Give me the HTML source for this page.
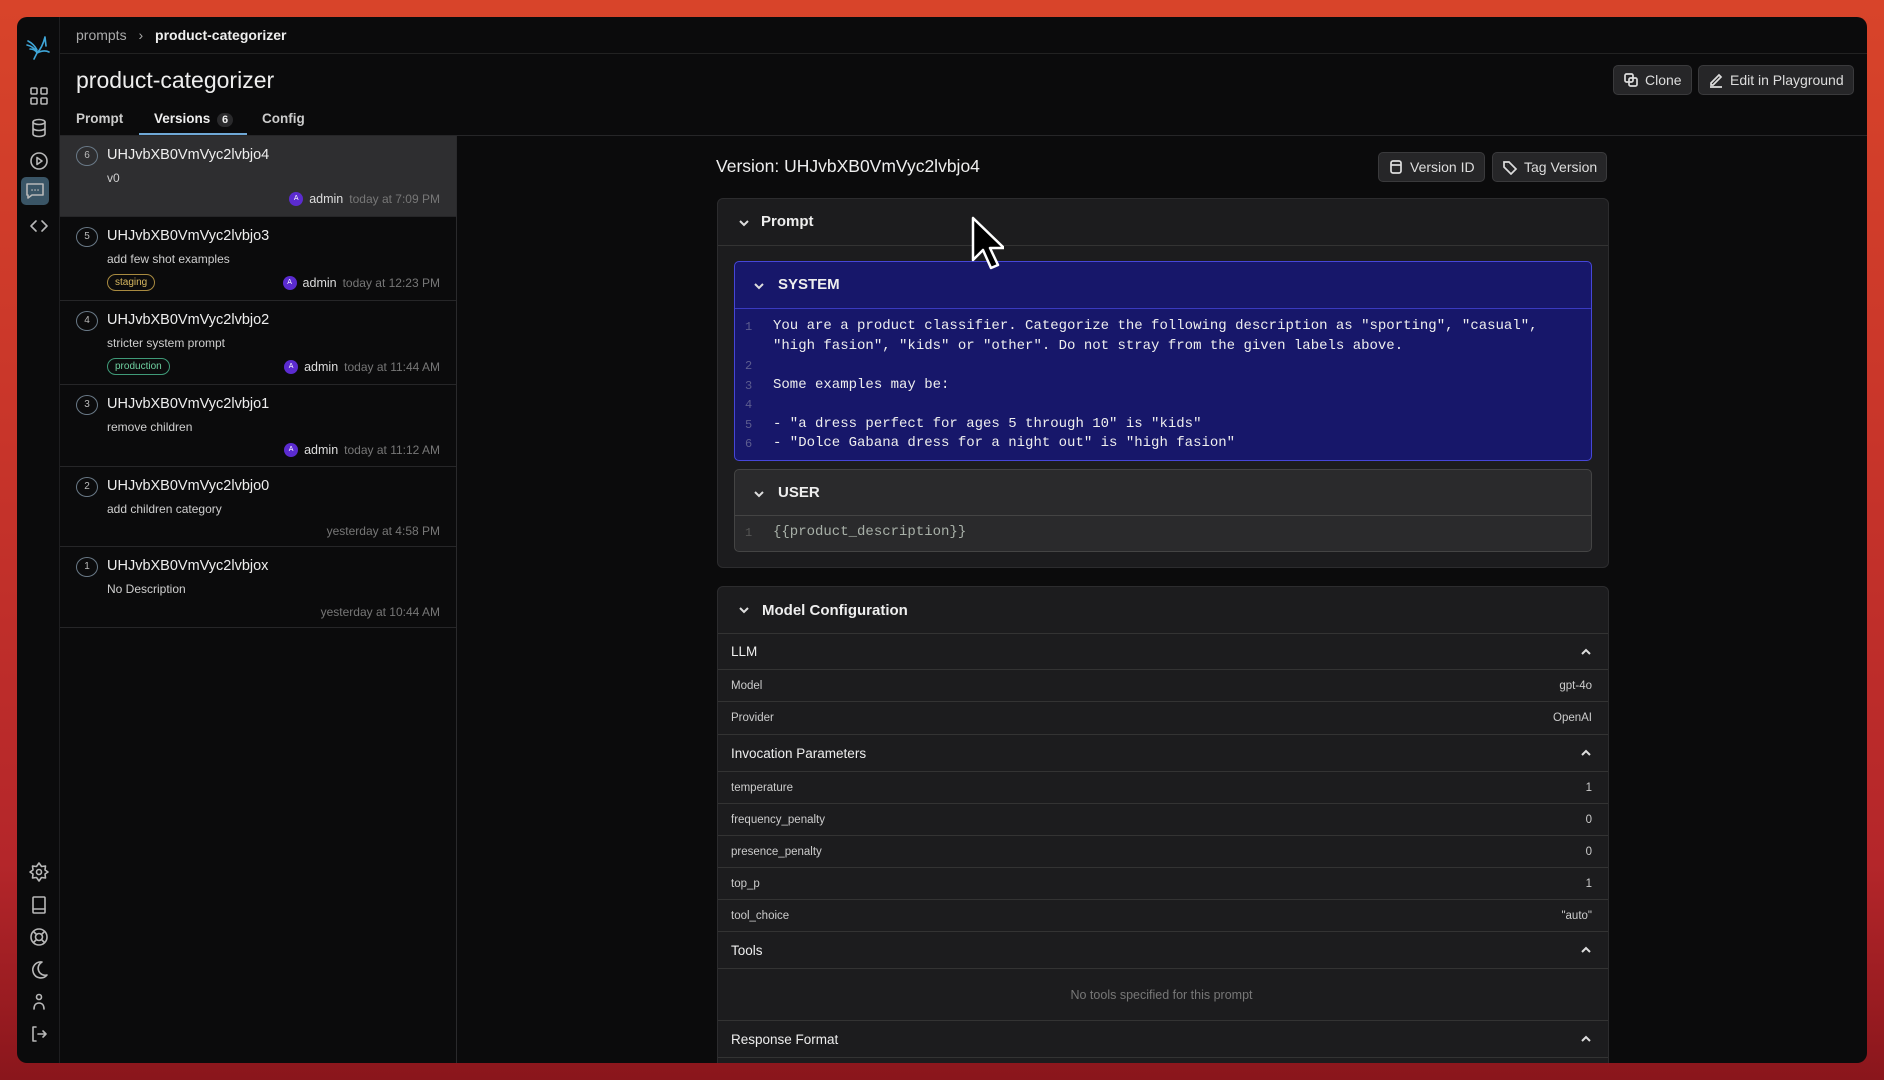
<!DOCTYPE html>
<html><head><meta charset="utf-8"><style>
*{box-sizing:border-box;margin:0;padding:0}
body{width:1884px;height:1080px;overflow:hidden;font-family:"Liberation Sans",sans-serif;background:linear-gradient(180deg,#d8442a 0%,#c8352a 40%,#b4262a 80%,#8a161c 100%);position:relative;color:#e6e6e6}
.win{position:absolute;left:17px;top:17px;width:1850px;height:1046px;background:#0b0b0c;border-radius:10px;overflow:hidden}
.abs{position:absolute}
.side{left:0;top:0;width:43px;height:100%;border-right:1px solid #1e1e20}
.ic{position:absolute;left:11px;width:22px;height:22px}
.ic svg{width:22px;height:22px;stroke:#b8b8b8;fill:none;stroke-width:1.6;stroke-linecap:round;stroke-linejoin:round}
.btn{position:absolute;height:30px;border:1px solid #3a3a3c;background:#262628;border-radius:5px;font-size:14px;color:#ddd;display:flex;align-items:center;padding:0 9px;gap:6px}
.btn svg{width:16px;height:16px;stroke:#ddd;fill:none;stroke-width:1.7}
.item{position:absolute;left:43px;width:396px;border-bottom:1px solid #262628}
.item .n{position:absolute;left:16px;top:10px;width:22px;height:20px;border:1.5px solid #6a7a88;border-radius:50%;font-size:10px;color:#bbb;text-align:center;line-height:17px}
.item .t{position:absolute;left:47px;top:11px;font-size:14.5px;color:#eee}
.item .d{position:absolute;left:47px;top:35px;font-size:12px;color:#cfcfcf}
.item .m{position:absolute;right:16px;font-size:12px;color:#777;display:flex;align-items:center;gap:6px}
.item .m b{font-weight:normal;color:#ddd;font-size:12.5px}
.av{width:14px;height:14px;border-radius:50%;background:#5b2bd0;color:#fff;font-size:7px;text-align:center;line-height:14px}
.tag{position:absolute;left:47px;font-size:10px;border:1px solid;border-radius:9px;padding:2px 7px}
.card{position:absolute;left:700px;width:892px;background:#1c1c1e;border:1px solid #2c2c2e;border-radius:6px;overflow:hidden}
.row{position:absolute;left:0;right:0;border-bottom:1px solid #333;display:flex;align-items:center;justify-content:space-between;padding:0 16px 0 13px;font-size:11.5px;color:#ccc}
.row.h{font-size:13.5px;color:#eee}
.chev{width:12px;height:12px;stroke:#ddd;fill:none;stroke-width:2}
.code{font-family:"Liberation Mono",monospace;font-size:14px;line-height:19.5px;white-space:pre}
.ln{position:absolute;left:10px;color:#5d5d90;font-family:"Liberation Mono",monospace;font-size:12px;line-height:19.5px;white-space:pre}
</style></head><body>
<div class="win">
 <div class="abs side">
  <svg class="abs" style="left:8px;top:16px;width:28px;height:28px" viewBox="0 0 28 28" fill="none" stroke="#3fa6d8" stroke-width="1.6" stroke-linecap="round"><path d="M3 8c4 2 7 5 9 9M2 12c5 1 8 4 10 7M5 16c4 0 6 2 7 4M12 20l-3 6M12 20c3-3 6-8 8-16M12 20c4-2 8-3 12-1M20 4l1 9"/></svg>
  <div class="ic" style="top:68px"><svg viewBox="0 0 22 22"><rect x="3" y="3" width="6" height="6" rx="1"/><rect x="13" y="3" width="6" height="6" rx="1"/><rect x="3" y="13" width="6" height="6" rx="1"/><rect x="13" y="13" width="6" height="6" rx="1"/></svg></div>
  <div class="ic" style="top:100px"><svg viewBox="0 0 22 22"><ellipse cx="11" cy="5" rx="6" ry="2.5"/><path d="M5 5v12c0 1.4 2.7 2.5 6 2.5s6-1.1 6-2.5V5M5 11c0 1.4 2.7 2.5 6 2.5s6-1.1 6-2.5"/></svg></div>
  <div class="ic" style="top:133px"><svg viewBox="0 0 22 22"><circle cx="11" cy="11" r="8"/><path d="M9 7.5v7l5-3.5z"/></svg></div>
  <div class="abs" style="left:4px;top:160px;width:28px;height:28px;background:#3a5566;border-radius:5px"></div>
  <div class="ic" style="top:163px;left:7px"><svg viewBox="0 0 22 22"><path d="M3 4h16v11H8l-4 3v-3H3z"/><path d="M8 10h.1M11 10h.1M14 10h.1"/></svg></div>
  <div class="ic" style="top:198px"><svg viewBox="0 0 22 22"><path d="M8 6l-5 5 5 5M14 6l5 5-5 5"/></svg></div>
  <div class="ic" style="top:844px"><svg viewBox="0 0 22 22"><path d="M11 2l2.5 3.5 4-.5-.5 4L20 11l-3 2 .5 4-4-.5L11 20l-2.5-3.5-4 .5.5-4L2 11l3-2-.5-4 4 .5z"/><circle cx="11" cy="11" r="2.5"/></svg></div>
  <div class="ic" style="top:877px"><svg viewBox="0 0 22 22"><rect x="5" y="3" width="12" height="16" rx="1"/><path d="M5 15h12"/></svg></div>
  <div class="ic" style="top:909px"><svg viewBox="0 0 22 22"><circle cx="11" cy="11" r="8"/><circle cx="11" cy="11" r="3.5"/><path d="M5.5 5.5l3 3M16.5 5.5l-3 3M5.5 16.5l3-3M16.5 16.5l-3-3"/></svg></div>
  <div class="ic" style="top:942px"><svg viewBox="0 0 22 22"><path d="M14 3a8 8 0 1 0 5 13A7 7 0 0 1 14 3z"/></svg></div>
  <div class="ic" style="top:974px"><svg viewBox="0 0 22 22"><circle cx="11" cy="6" r="2.5"/><path d="M6 18c0-4 2-6 5-6s5 2 5 6"/></svg></div>
  <div class="ic" style="top:1006px"><svg viewBox="0 0 22 22"><path d="M8 4H5v14h3M10 11h8M15 8l3 3-3 3"/></svg></div>
 </div>
 <div class="abs" style="left:43px;top:36px;right:0;border-bottom:1px solid #222"></div>
 <div class="abs" style="left:59px;top:10px;font-size:14px;color:#aaa">prompts <span style="margin:0 8px">›</span> <b style="color:#eee">product-categorizer</b></div>
 <div class="abs" style="left:59px;top:50px;font-size:23px;color:#eee">product-categorizer</div>
 <div class="abs" style="left:59px;top:94px;font-size:13.5px;font-weight:bold;color:#ccc">Prompt</div>
 <div class="abs" style="left:137px;top:94px;font-size:13.5px;font-weight:bold;color:#eee">Versions <span style="display:inline-block;background:#2a2a2c;border-radius:8px;font-size:11px;padding:1px 5px;margin-left:3px">6</span></div>
 <div class="abs" style="left:245px;top:94px;font-size:13.5px;font-weight:bold;color:#ccc">Config</div>
 <div class="abs" style="left:122px;top:116px;width:108px;height:2px;background:#6fa8d6"></div>
 <div class="abs" style="left:43px;top:118px;right:0;border-bottom:1px solid #262628"></div>
 <div class="btn" style="left:1596px;top:48px"><svg viewBox="0 0 16 16"><rect x="2" y="2" width="8" height="8" rx="1.5"/><rect x="6" y="6" width="8" height="8" rx="1.5"/></svg>Clone</div>
 <div class="btn" style="left:1681px;top:48px"><svg viewBox="0 0 16 16"><path d="M3 11l8-8 2 2-8 8H3zM2 15h12"/></svg>Edit in Playground</div>

 <div class="abs" style="left:439px;top:119px;width:1px;height:930px;background:#2a2a2c"></div>
 <div class="item" style="top:119px;height:81px;background:#2e2e30"><div class="n">6</div><div class="t">UHJvbXB0VmVyc2lvbjo4</div><div class="d">v0</div><div class="m" style="top:56px"><span class="av">A</span><b>admin</b> today at 7:09 PM</div></div>
 <div class="item" style="top:200px;height:84px"><div class="n">5</div><div class="t">UHJvbXB0VmVyc2lvbjo3</div><div class="d">add few shot examples</div><div class="tag" style="top:57px;color:#d8b860;border-color:#a88a40">staging</div><div class="m" style="top:59px"><span class="av">A</span><b>admin</b> today at 12:23 PM</div></div>
 <div class="item" style="top:284px;height:84px"><div class="n">4</div><div class="t">UHJvbXB0VmVyc2lvbjo2</div><div class="d">stricter system prompt</div><div class="tag" style="top:57px;color:#6fd0a0;border-color:#3f9a78">production</div><div class="m" style="top:59px"><span class="av">A</span><b>admin</b> today at 11:44 AM</div></div>
 <div class="item" style="top:368px;height:82px"><div class="n">3</div><div class="t">UHJvbXB0VmVyc2lvbjo1</div><div class="d">remove children</div><div class="m" style="top:58px"><span class="av">A</span><b>admin</b> today at 11:12 AM</div></div>
 <div class="item" style="top:450px;height:80px"><div class="n">2</div><div class="t">UHJvbXB0VmVyc2lvbjo0</div><div class="d">add children category</div><div class="m" style="top:57px">yesterday at 4:58 PM</div></div>
 <div class="item" style="top:530px;height:81px"><div class="n">1</div><div class="t">UHJvbXB0VmVyc2lvbjox</div><div class="d">No Description</div><div class="m" style="top:58px">yesterday at 10:44 AM</div></div>

 <div class="abs" style="left:699px;top:139px;font-size:17.5px;color:#eee">Version: UHJvbXB0VmVyc2lvbjo4</div>
 <div class="btn" style="left:1361px;top:135px"><svg viewBox="0 0 16 16"><rect x="3" y="2" width="10" height="12" rx="2"/><path d="M3 6h10"/></svg>Version ID</div>
 <div class="btn" style="left:1475px;top:135px"><svg viewBox="0 0 16 16"><path d="M2 3v5l7 7 5-5-7-7zM5 5.5h.1"/></svg>Tag Version</div>

 <div class="card" style="top:181px;height:370px">
  <div class="abs" style="left:0;right:0;top:0;height:47px;border-bottom:1px solid #333"></div>
  <svg class="chev abs" style="left:20px;top:18px" viewBox="0 0 12 12"><path d="M2 4l4 4 4-4"/></svg>
  <div class="abs" style="left:43px;top:14px;font-size:15px;font-weight:bold;color:#eee">Prompt</div>
  <div class="abs" style="left:16px;top:62px;width:858px;height:200px;background:#17176a;border:1px solid #4646d8;border-radius:5px;overflow:hidden">
   <div class="abs" style="left:0;right:0;top:0;height:47px;border-bottom:1px solid #3a3ac0"></div>
   <svg class="chev abs" style="left:18px;top:18px" viewBox="0 0 12 12"><path d="M2 4l4 4 4-4"/></svg>
   <div class="abs" style="left:43px;top:14px;font-size:15px;font-weight:bold;color:#eee">SYSTEM</div>
   <div class="ln" style="top:56px">1

2
3
4
5
6</div>
   <div class="abs code" style="left:38px;top:55px;color:#eee">You are a product classifier. Categorize the following description as "sporting", "casual",
"high fasion", "kids" or "other". Do not stray from the given labels above.

Some examples may be:

- "a dress perfect for ages 5 through 10" is "kids"
- "Dolce Gabana dress for a night out" is "high fasion"</div>
  </div>
  <div class="abs" style="left:16px;top:270px;width:858px;height:83px;background:#2a2a2c;border:1px solid #444;border-radius:5px;overflow:hidden">
   <div class="abs" style="left:0;right:0;top:0;height:46px;border-bottom:1px solid #444"></div>
   <svg class="chev abs" style="left:18px;top:18px" viewBox="0 0 12 12"><path d="M2 4l4 4 4-4"/></svg>
   <div class="abs" style="left:43px;top:14px;font-size:15px;font-weight:bold;color:#eee">USER</div>
   <div class="ln" style="top:54px;color:#555">1</div>
   <div class="abs code" style="left:38px;top:53px;color:#a8b0a8">{{product_description}}</div>
  </div>
 </div>

 <div class="card" style="top:569px;height:490px">
  <div class="row" style="top:0;height:47px;justify-content:flex-start;border-bottom:1px solid #333"><svg class="chev" style="margin-left:7px" viewBox="0 0 12 12"><path d="M2 4l4 4 4-4"/></svg><span style="margin-left:12px;font-size:15px;font-weight:bold;color:#eee">Model Configuration</span></div>
  <div class="row h" style="top:47px;height:36px"><span>LLM</span><svg class="chev" viewBox="0 0 12 12"><path d="M2 8l4-4 4 4"/></svg></div>
  <div class="row" style="top:83px;height:32px"><span>Model</span><span>gpt-4o</span></div>
  <div class="row" style="top:115px;height:33px"><span>Provider</span><span>OpenAI</span></div>
  <div class="row h" style="top:148px;height:37px"><span>Invocation Parameters</span><svg class="chev" viewBox="0 0 12 12"><path d="M2 8l4-4 4 4"/></svg></div>
  <div class="row" style="top:185px;height:32px"><span>temperature</span><span>1</span></div>
  <div class="row" style="top:217px;height:32px"><span>frequency_penalty</span><span>0</span></div>
  <div class="row" style="top:249px;height:32px"><span>presence_penalty</span><span>0</span></div>
  <div class="row" style="top:281px;height:32px"><span>top_p</span><span>1</span></div>
  <div class="row" style="top:313px;height:32px"><span>tool_choice</span><span>"auto"</span></div>
  <div class="row h" style="top:345px;height:37px"><span>Tools</span><svg class="chev" viewBox="0 0 12 12"><path d="M2 8l4-4 4 4"/></svg></div>
  <div class="row" style="top:382px;height:52px;justify-content:center;color:#777;font-size:12.5px">No tools specified for this prompt</div>
  <div class="row h" style="top:434px;height:37px"><span>Response Format</span><svg class="chev" viewBox="0 0 12 12"><path d="M2 8l4-4 4 4"/></svg></div>
 </div>

 <svg class="abs" style="left:953px;top:199px;width:34px;height:56px" viewBox="0 0 34 56"><path d="M3 2v42l10-10 8 18 7-3-8-17h14z" fill="#000" stroke="#fff" stroke-width="2.5" stroke-linejoin="round"/></svg>
</div>
</body></html>
